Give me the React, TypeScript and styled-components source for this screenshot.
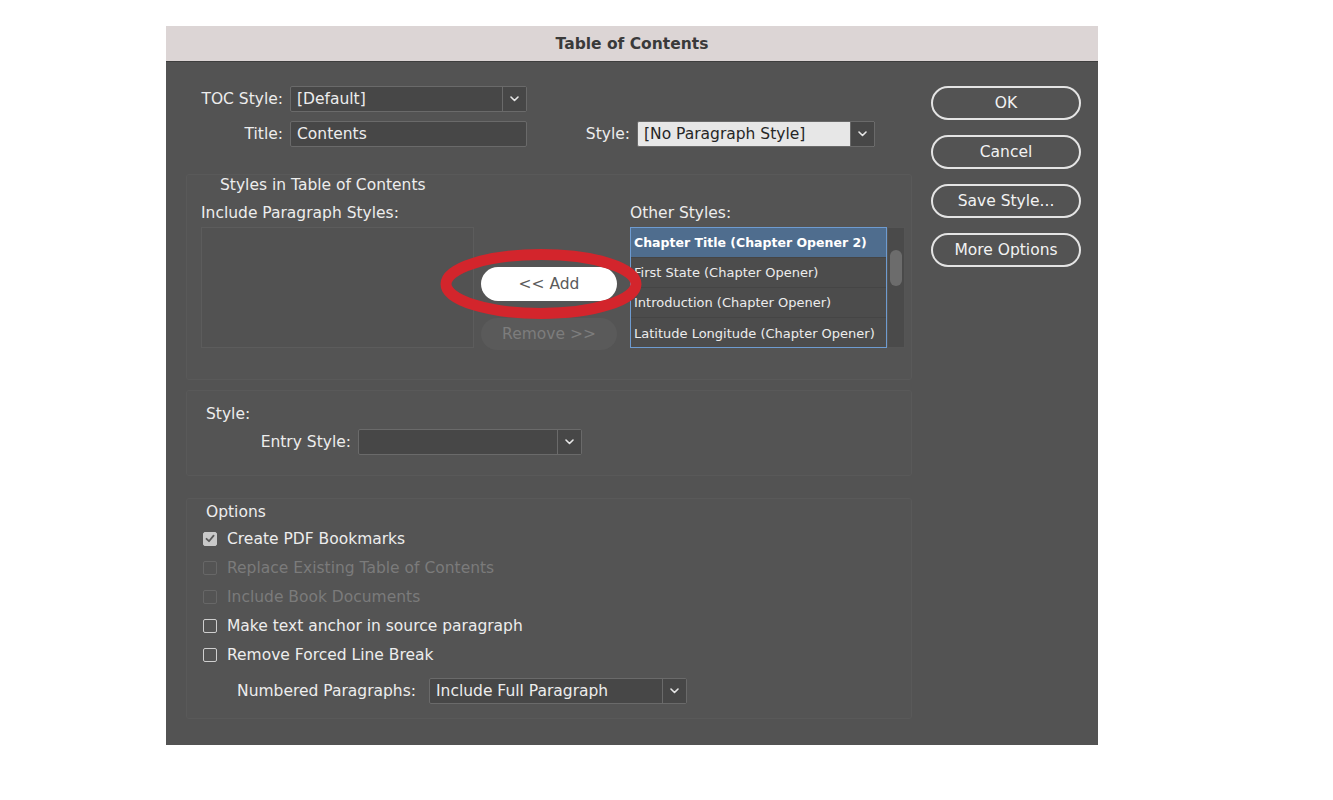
import styled, { createGlobalStyle } from 'styled-components';

const GlobalStyle = createGlobalStyle`
  html, body {
    margin: 0;
    padding: 0;
    background: #ffffff;
  }
  body {
    font-family: "DejaVu Sans", "Open Sans", sans-serif;
  }
  * {
    box-sizing: border-box;
  }
`;

function Chevron() {
  return (
    <svg width="9" height="6" viewBox="0 0 9 6">
      <path d="M1 1 L4.5 4.5 L8 1" fill="none" stroke="#e6e6e6" strokeWidth="1.6" strokeLinecap="round" strokeLinejoin="round" />
    </svg>
  );
}

function Check() {
  return (
    <svg width="10" height="9" viewBox="0 0 10 9">
      <path d="M1.5 4.8 L4 7.2 L8.6 1.6" fill="none" stroke="#5a5a5a" strokeWidth="1.8" strokeLinecap="round" strokeLinejoin="round" />
    </svg>
  );
}

interface SelectProps {
  width: number;
  value?: string;
  light?: boolean;
}

function Select({ width, value, light }: SelectProps) {
  return (
    <SelectBox $width={width} $light={light}>
      <SelectValue $light={light}>{value}</SelectValue>
      <SelectArrow>
        <Chevron />
      </SelectArrow>
    </SelectBox>
  );
}

interface OptionProps {
  label: string;
  checked?: boolean;
  disabled?: boolean;
}

function CheckOption({ label, checked, disabled }: OptionProps) {
  return (
    <CheckRow>
      <Box $checked={checked} $disabled={disabled}>{checked && <Check />}</Box>
      <CheckLabel $disabled={disabled}>{label}</CheckLabel>
    </CheckRow>
  );
}

const otherStyles = [
  'Chapter Title (Chapter Opener 2)',
  'First State (Chapter Opener)',
  'Introduction (Chapter Opener)',
  'Latitude Longitude (Chapter Opener)',
];

function App() {
  return (
    <Page>
      <GlobalStyle />
      <Dialog>
        <TitleBar>Table of Contents</TitleBar>
        <Body>
          <Main>
            <TopForm>
              <FormRow>
                <Label $width={97}>TOC Style:</Label>
                <Select width={237} value="[Default]" />
              </FormRow>
              <FormRow>
                <Label $width={97}>Title:</Label>
                <TextInput>Contents</TextInput>
                <Label $width={103}>Style:</Label>
                <Select width={238} value="[No Paragraph Style]" light />
              </FormRow>
            </TopForm>

            <Group $top={27} $pad="0 0 29px 14px">
              <GroupTitle>Styles in Table of Contents</GroupTitle>
              <ListsRow>
                <Column>
                  <ColumnLabel>Include Paragraph Styles:</ColumnLabel>
                  <EmptyList />
                </Column>
                <Middle>
                  <AddButton>&lt;&lt; Add</AddButton>
                  <RemoveButton>Remove &gt;&gt;</RemoveButton>
                  <Highlight width="202" height="70" viewBox="0 0 202 70">
                    <ellipse cx="101" cy="35" rx="95" ry="29.5" fill="none" stroke="#d3252c" strokeWidth="11" />
                  </Highlight>
                </Middle>
                <Column>
                  <ColumnLabel>Other Styles:</ColumnLabel>
                  <ListWrap>
                    <StyleList>
                      {otherStyles.map((s, i) => (
                        <StyleItem key={s} $selected={i === 0}>{s}</StyleItem>
                      ))}
                    </StyleList>
                    <ScrollTrack>
                      <ScrollThumb />
                    </ScrollTrack>
                  </ListWrap>
                </Column>
              </ListsRow>
            </Group>

            <Group $top={10} $pad="13px 0 20px 0">
              <GroupTitle>Style:</GroupTitle>
              <FormRow $top={5}>
                <Label $width={164}>Entry Style:</Label>
                <Select width={224} />
              </FormRow>
            </Group>

            <Group $top={22} $pad="3px 0 14px 0">
              <GroupTitle>Options</GroupTitle>
              <Checks>
                <CheckOption label="Create PDF Bookmarks" checked />
                <CheckOption label="Replace Existing Table of Contents" disabled />
                <CheckOption label="Include Book Documents" disabled />
                <CheckOption label="Make text anchor in source paragraph" />
                <CheckOption label="Remove Forced Line Break" />
              </Checks>
              <FormRow $top={9}>
                <Label $width={229} $gap={13}>Numbered Paragraphs:</Label>
                <Select width={258} value="Include Full Paragraph" />
              </FormRow>
            </Group>
          </Main>

          <Side>
            <PillButton $strong>OK</PillButton>
            <PillButton>Cancel</PillButton>
            <PillButton>Save Style...</PillButton>
            <PillButton>More Options</PillButton>
          </Side>
        </Body>
      </Dialog>
    </Page>
  );
}

export default App;

const Page = styled.div`
  padding: 26px 0 0 166px;
  min-height: 800px;
`;

const Dialog = styled.div`
  width: 932px;
  height: 719px;
  background: #535353;
  display: flex;
  flex-direction: column;
`;

const TitleBar = styled.div`
  height: 36px;
  background: #dcd5d5;
  border-bottom: 1px solid #3e3e3e;
  color: #3a3a3a;
  font-weight: 700;
  font-size: 15.5px;
  display: flex;
  align-items: center;
  justify-content: center;
  padding-top: 1px;
`;

const Body = styled.div`
  display: flex;
  padding: 24px 0 0 20px;
`;

const Main = styled.div`
  width: 726px;
  display: flex;
  flex-direction: column;
`;

const TopForm = styled.div`
  display: flex;
  flex-direction: column;
  gap: 9px;
`;

const FormRow = styled.div<{ $top?: number }>`
  display: flex;
  align-items: center;
  height: 26px;
  margin-top: ${(p) => p.$top ?? 0}px;
`;

const Label = styled.div<{ $width: number; $gap?: number }>`
  width: ${(p) => p.$width}px;
  margin-right: ${(p) => p.$gap ?? 7}px;
  text-align: right;
  color: #ededed;
  font-size: 15.5px;
  white-space: nowrap;
`;

const SelectBox = styled.div<{ $width: number; $light?: boolean }>`
  width: ${(p) => p.$width}px;
  height: 26px;
  display: flex;
  background: ${(p) => (p.$light ? '#e7e7e7' : '#474747')};
  border: 1px solid #6a6a6a;
  border-radius: 2px;
`;

const SelectValue = styled.div<{ $light?: boolean }>`
  flex: 1;
  padding-left: 6px;
  display: flex;
  align-items: center;
  font-size: 15.5px;
  color: ${(p) => (p.$light ? '#262626' : '#ededed')};
  white-space: nowrap;
  overflow: hidden;
`;

const SelectArrow = styled.div`
  width: 24px;
  display: flex;
  align-items: center;
  justify-content: center;
  background: #474747;
  border-left: 1px solid #6a6a6a;
`;

const TextInput = styled.div`
  width: 237px;
  height: 26px;
  background: #474747;
  border: 1px solid #6a6a6a;
  border-radius: 2px;
  padding-left: 6px;
  display: flex;
  align-items: center;
  color: #ededed;
  font-size: 15.5px;
`;

const Group = styled.div<{ $top: number; $pad: string }>`
  margin-top: ${(p) => p.$top}px;
  padding: ${(p) => p.$pad};
  border: 1px solid #595959;
  border-radius: 3px;
  background: #545454;
`;

const GroupTitle = styled.div`
  height: 20px;
  line-height: 20px;
  padding-left: 19px;
  color: #ededed;
  font-size: 15.5px;
`;

const ListsRow = styled.div`
  display: flex;
  margin-top: 8px;
`;

const Column = styled.div`
  display: flex;
  flex-direction: column;
  gap: 4px;
`;

const ColumnLabel = styled.div`
  height: 20px;
  line-height: 20px;
  color: #ededed;
  font-size: 15.5px;
  white-space: nowrap;
`;

const EmptyList = styled.div`
  width: 273px;
  height: 121px;
  background: #525252;
  border: 1px solid #5c5c5c;
`;

const Middle = styled.div`
  position: relative;
  width: 136px;
  margin: 0 13px 0 7px;
  padding-top: 64px;
  display: flex;
  flex-direction: column;
  gap: 17px;
`;

const AddButton = styled.div`
  height: 34px;
  border-radius: 17px;
  background: #ffffff;
  color: #5b5b5b;
  font-size: 15.5px;
  display: flex;
  align-items: center;
  justify-content: center;
`;

const RemoveButton = styled.div`
  height: 32px;
  border-radius: 16px;
  background: #5a5a5a;
  color: #7d7d7d;
  font-size: 15.5px;
  display: flex;
  align-items: center;
  justify-content: center;
`;

const Highlight = styled.svg`
  position: absolute;
  left: -41px;
  top: 46px;
  z-index: 2;
  pointer-events: none;
`;

const ListWrap = styled.div`
  display: flex;
`;

const StyleList = styled.div`
  width: 257px;
  height: 121px;
  border: 1px solid #6e9bd0;
  background: #4c4c4c;
  display: flex;
  flex-direction: column;
`;

const StyleItem = styled.div<{ $selected?: boolean }>`
  height: 30px;
  flex-shrink: 0;
  padding-left: 3px;
  display: flex;
  align-items: center;
  font-size: ${(p) => (p.$selected ? 12.5 : 13)}px;
  font-weight: ${(p) => (p.$selected ? 700 : 400)};
  color: ${(p) => (p.$selected ? '#ffffff' : '#ececec')};
  background: ${(p) => (p.$selected ? '#4f6d8e' : 'transparent')};
  border-bottom: 1px solid #454545;
  white-space: nowrap;
  overflow: hidden;

  &:last-child {
    border-bottom: none;
  }
`;

const ScrollTrack = styled.div`
  width: 18px;
  height: 121px;
  background: #4a4a4a;
  border: 1px solid #555555;
  padding: 22px 2px 0;
`;

const ScrollThumb = styled.div`
  height: 36px;
  border-radius: 6px;
  background: #6c6c6c;
`;

const Checks = styled.div`
  display: flex;
  flex-direction: column;
  margin-top: 2px;
  padding-left: 16px;
`;

const CheckRow = styled.div`
  height: 29px;
  display: flex;
  align-items: center;
  gap: 10px;
`;

const Box = styled.div<{ $checked?: boolean; $disabled?: boolean }>`
  width: 14px;
  height: 14px;
  border-radius: 2px;
  display: flex;
  align-items: center;
  justify-content: center;
  background: ${(p) => (p.$checked ? '#c9c9c9' : 'transparent')};
  border: 1px solid ${(p) => (p.$checked ? '#c9c9c9' : p.$disabled ? '#676767' : '#cfcfcf')};
`;

const CheckLabel = styled.div<{ $disabled?: boolean }>`
  font-size: 15.5px;
  color: ${(p) => (p.$disabled ? '#7b7b7b' : '#ededed')};
  white-space: nowrap;
`;

const Side = styled.div`
  margin-left: 19px;
  width: 150px;
  display: flex;
  flex-direction: column;
  gap: 15px;
`;

const PillButton = styled.div<{ $strong?: boolean }>`
  height: 34px;
  border-radius: 17px;
  border: ${(p) => (p.$strong ? 2.5 : 2)}px solid #e4e4e4;
  color: #f2f2f2;
  font-size: 15.5px;
  display: flex;
  align-items: center;
  justify-content: center;
`;
